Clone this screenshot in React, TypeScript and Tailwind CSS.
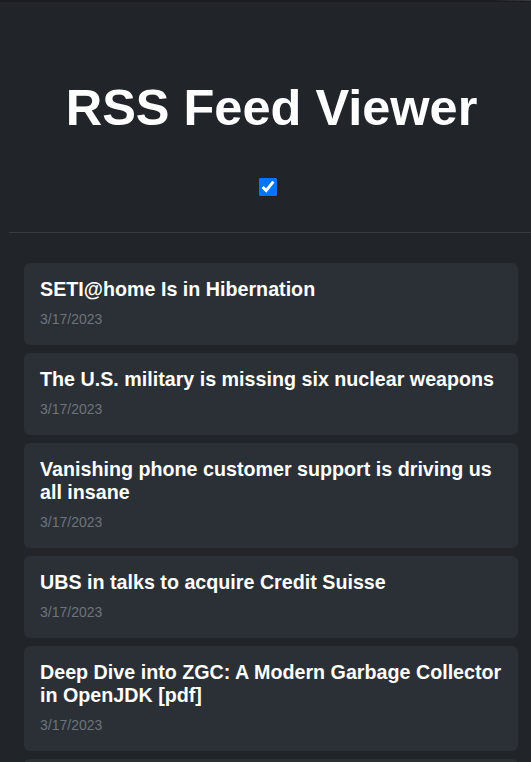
import React from "react";

const items = [
  "SETI@home Is in Hibernation",
  "The U.S. military is missing six nuclear weapons",
  "Vanishing phone customer support is driving us all insane",
  "UBS in talks to acquire Credit Suisse",
  "Deep Dive into ZGC: A Modern Garbage Collector in OpenJDK [pdf]",
];

export default function App() {
  return (
    <div
      className="h-[762px] bg-[#212429] text-white overflow-hidden"
      style={{ fontFamily: '"Liberation Sans", Arial, sans-serif' }}
    >
      <div className="h-[2px] bg-[#1a1c20] relative">
        <div className="absolute right-0 top-0 h-[1px] w-[40px] bg-gradient-to-r from-[#1a1c20] to-[#3a3d42]" />
      </div>
      <header className="ml-[9px] border-b border-[#383b40] pt-[68px] pb-[36px] flex flex-col items-center">
        <h1 className="text-[50.5px] font-bold leading-normal m-0 pl-[3px]">RSS Feed Viewer</h1>
        <input
          type="checkbox"
          checked
          readOnly
          className="mt-[32px] w-[18px] h-[18px] accent-[#0075ff] m-0 mr-[4px]"
        />
      </header>
      <div className="ml-[24px] mr-[13px] mt-[30px] flex flex-col gap-[8px]">
        {items.map((t) => (
          <div key={t} className="bg-[#2b2f36] rounded-[6px] pl-[16px] pr-[10px] pt-[15px] pb-[18px]">
            <div className="text-[19.7px] font-bold leading-[23px] text-white">{t}</div>
            <div className="mt-[10px] text-[14px] leading-[16px] text-[#6c757d]">3/17/2023</div>
          </div>
        ))}
        <div className="bg-[#2b2f36] rounded-[6px] h-[82px]" />
      </div>
    </div>
  );
}
